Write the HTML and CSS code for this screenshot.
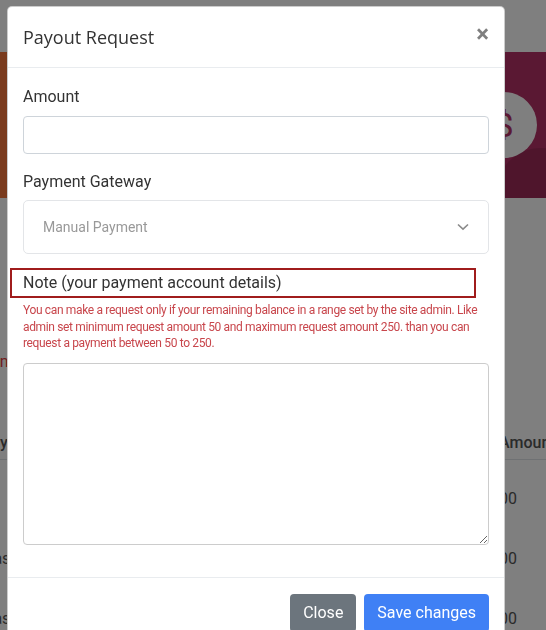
FILE: index.html
```html
<!DOCTYPE html>
<html lang="en">
<head>
    <meta charset="UTF-8">
    <meta name="viewport" content="width=device-width, initial-scale=1.0">
    <title>Payout Request</title>
    <link rel="stylesheet" href="styles.css">
</head>
<body>
    <!-- page behind the modal -->
    <div class="page">
        <div class="hero">
            <div class="stat stat-orange"></div>
            <div class="stat stat-maroon">
                <span class="coin">$</span>
            </div>
        </div>
        <p class="notice"><span>Min</span></p>
        <div class="table">
            <div class="row head">
                <div class="cell-left"><span class="shift-buy">Buy</span></div>
                <div class="cell-right">Amount</div>
            </div>
            <div class="row">
                <div class="cell-left"></div>
                <div class="cell-right num">100</div>
            </div>
            <div class="row">
                <div class="cell-left"><span class="shift-cash">Cash</span></div>
                <div class="cell-right num">200</div>
            </div>
            <div class="row">
                <div class="cell-left"><span class="shift-cash">Cash</span></div>
                <div class="cell-right num">500</div>
            </div>
        </div>
    </div>

    <div class="backdrop"></div>

    <div class="modal">
        <div class="modal-dialog">
            <div class="modal-content">
                <div class="modal-header">
                    <h5 class="modal-title">Payout Request</h5>
                    <button class="close" type="button">&times;</button>
                </div>
                <div class="modal-body">
                    <label class="label">Amount</label>
                    <input class="input" type="text">

                    <label class="label">Payment Gateway</label>
                    <div class="select">
                        <span>Manual Payment</span>
                        <svg width="12" height="8" viewBox="0 0 12 8">
                            <path d="M1 1.5 L6 6.2 L11 1.5" fill="none" stroke="#8a8a8a" stroke-width="1.6"/>
                        </svg>
                    </div>

                    <label class="label note">Note (your payment account details)</label>
                    <p class="hint">You can make a request only if your remaining balance in a range set by the site admin. Like admin set minimum request amount 50 and maximum request amount 250. than you can request a payment between 50 to 250.</p>
                    <textarea class="textarea"></textarea>
                </div>
                <div class="modal-footer">
                    <button class="btn btn-grey" type="button">Close</button>
                    <button class="btn btn-blue" type="button">Save changes</button>
                </div>
            </div>
        </div>
    </div>
</body>
</html>
```

FILE: styles.css
```css
body {
    margin: 0;
    font-family: Roboto, "Liberation Sans", sans-serif;
    color: #333;
    background: #fff;
    overflow: hidden;
    height: 630px;
}

/* background page */
.page {
    width: 546px;
}
.hero {
    display: flex;
    margin-top: 52px;
    height: 146px;
}
.stat {
    flex: 1;
}
.stat-orange { background-color: #f4763c; }
.stat-maroon {
    background-color: #b43066;
    display: flex;
    align-items: center;
    justify-content: flex-end;
    padding-right: 9px;
    position: relative;
    overflow: hidden;
}
.stat-maroon::after {
    content: "";
    position: absolute;
    right: -40px;
    bottom: -40px;
    width: 90px;
    height: 90px;
    border-radius: 50%;
    background: rgba(0, 0, 0, 0.12);
}
.coin {
    width: 66px;
    height: 66px;
    border-radius: 50%;
    background: #fff;
    color: #b43066;
    font-size: 34px;
    line-height: 66px;
    text-align: center;
}
.notice {
    margin: 155px 0 0;
    color: #e03a3a;
    font-size: 16px;
    line-height: 18px;
}
.notice span { margin-left: -18px; }

.table {
    margin-top: 58px;
}
.row {
    display: grid;
    grid-template-columns: 1fr 56px;
    height: 60px;
    font-size: 16px;
    line-height: 18px;
    color: #555;
}
.row > div {
    padding-top: 30px;
    white-space: nowrap;
    overflow: visible;
}
.row.head {
    height: 30px;
    border-bottom: 1px solid #dee2e6;
    font-weight: 500;
}
.row.head > div { padding-top: 5px; }
.row.head .cell-right { padding-left: 9px; }
.shift-buy { margin-left: -19px; }
.shift-cash { margin-left: -17px; }

.backdrop {
    position: fixed;
    inset: 0;
    background: rgba(0, 0, 0, 0.5);
}

/* modal */
.modal {
    position: fixed;
    inset: 0;
}
.modal-dialog {
    margin: 6px 0 0 7px;
    width: 498px;
}
.modal-content {
    background: #fff;
    border: 1px solid rgba(0, 0, 0, 0.2);
    border-radius: 5px;
}
.modal-header {
    display: flex;
    justify-content: space-between;
    align-items: flex-start;
    padding: 15px;
    border-bottom: 1px solid #e9ecef;
}
.modal-title {
    margin: 0;
    font-family: "Open Sans", sans-serif;
    font-weight: 400;
    font-size: 18px;
    line-height: 30px;
    color: #333;
}
.close {
    margin-top: 1px;
    padding: 0;
    border: none;
    background: none;
    font-family: Roboto, sans-serif;
    font-size: 24px;
    font-weight: 700;
    line-height: 22px;
    color: #000;
    opacity: 0.5;
    cursor: pointer;
}
.modal-body {
    padding: 17px 15px 16px;
}
.label {
    display: block;
    font-size: 16px;
    line-height: 24px;
    color: #333;
    margin-bottom: 8px;
}
.input {
    display: block;
    box-sizing: border-box;
    width: 100%;
    height: 38px;
    border: 1px solid #ced4da;
    border-radius: 4px;
    margin: -1px 0 16px;
}
.select {
    display: flex;
    align-items: center;
    justify-content: space-between;
    box-sizing: border-box;
    height: 54px;
    margin-top: -2px;
    padding: 0 19px;
    border: 1px solid #e3e5e8;
    border-radius: 5px;
    font-size: 14px;
    color: #999;
    margin-bottom: 14px;
}
.note {
    box-sizing: border-box;
    width: 466px;
    margin: 0 0 0 -13px;
    padding: 1px 11px;
    border: 2px solid #a01c1c;
}
.hint {
    margin: 4px 0 11px;
    font-size: 12px;
    letter-spacing: -0.35px;
    line-height: 16.7px;
    color: #c8464c;
}
.textarea {
    display: block;
    box-sizing: border-box;
    width: 100%;
    height: 182px;
    border: 1px solid #ccc;
    border-radius: 4px;
    margin: 0 0 16px;
}
.modal-footer {
    display: flex;
    justify-content: flex-end;
    gap: 8px;
    padding: 16px 15px;
    border-top: 1px solid #e9ecef;
}
.btn {
    padding: 8px 13px;
    border: none;
    border-radius: 4px;
    font-family: Roboto, sans-serif;
    font-size: 16px;
    line-height: 22px;
    color: #fff;
    cursor: pointer;
}
.btn-grey { background-color: #6c757d; }
.btn-blue { background-color: #3f80f5; }
```
